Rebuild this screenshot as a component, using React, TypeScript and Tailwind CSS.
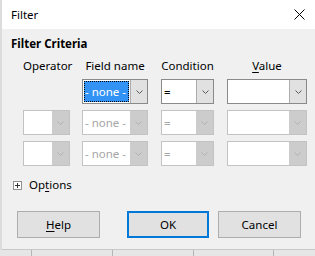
import React from 'react';

function Chevron({ disabled }: { disabled?: boolean }) {
  return (
    <svg width="9" height="6" viewBox="0 0 9 6" className="block">
      <path d="M1.5 1.5 L4.5 4.5 L7.5 1.5" fill="none" stroke={disabled ? '#b0b0b0' : '#5a5a5a'} strokeWidth="1" />
    </svg>
  );
}

function Combo({
  width,
  text,
  disabled,
  selected,
}: {
  width: string;
  text?: string;
  disabled?: boolean;
  selected?: boolean;
}) {
  return (
    <div
      className={`flex h-[25px] ${width} border bg-white ${
        disabled ? 'border-[#c3c3c3]' : 'border-[#8a8a8a]'
      }`}
    >
      <div className="flex flex-1 items-center p-[1px] overflow-hidden">
        {selected ? (
          <div className="flex h-full flex-1 items-center whitespace-nowrap border border-dotted border-black bg-[#3393f5] text-white">
            {text}
          </div>
        ) : (
          <span className={`whitespace-nowrap pl-[1px] ${disabled ? 'text-[#a6a6a6]' : 'text-black'}`}>{text}</span>
        )}
      </div>
      <div
        className={`flex w-[17px] items-center justify-center ${
          disabled ? 'bg-[#cccccc]' : 'border-l border-[#adadad] bg-[#e1e1e1]'
        }`}
      >
        <Chevron disabled={disabled} />
      </div>
    </div>
  );
}

function Row({ first }: { first?: boolean }) {
  return (
    <div className="flex h-[25px] items-center">
      <div className="w-[47px]">{!first && <Combo width="w-[47px]" disabled />}</div>
      <div className="ml-[12px]">
        <Combo width="w-[66px]" text="- none -" disabled={!first} selected={first} />
      </div>
      <div className="ml-[13px]">
        <Combo width="w-[53px]" text="=" disabled={!first} />
      </div>
      <div className="ml-[13px]">
        <Combo width="w-[80px]" disabled={!first} />
      </div>
    </div>
  );
}

export default function App() {
  return (
    <div className="flex h-[256px] w-[315px] flex-col overflow-hidden bg-[#e8e8e8] text-[11.5px] leading-[16px] text-black [font-family:'Noto_Sans',sans-serif]">
      <div className="flex flex-1">
        {/* spreadsheet peeking out on the left */}
        <div className="w-[2px] bg-[#dcdcdc]" />
        <div className="flex flex-1 flex-col border-b border-[#c8c8c8] bg-[#f0f0f0]">
          {/* Title bar */}
          <div className="flex h-[29px] items-center bg-white pl-[9px] pr-[10px]">
            <span className="flex-1">Filter</span>
            <svg width="11" height="11" viewBox="0 0 11 11">
              <path d="M0.5 0.5 L10.5 10.5 M10.5 0.5 L0.5 10.5" stroke="#000" strokeWidth="1" />
            </svg>
          </div>

          <div className="flex flex-col pl-[9px]">
            <div className="mt-[7px] font-bold">Filter Criteria</div>

            <div className="mt-[6px] flex h-[16px] pl-[12px]">
              <div className="w-[47px] whitespace-nowrap text-center">Operator</div>
              <div className="ml-[12px] w-[66px] whitespace-nowrap text-center">Field name</div>
              <div className="ml-[13px] w-[53px] whitespace-nowrap text-center">Condition</div>
              <div className="ml-[13px] w-[80px] text-center">
                <span className="underline underline-offset-2">V</span>alue
              </div>
            </div>

            <div className="mt-[5px] flex flex-col gap-[6px] pl-[12px]">
              <Row first />
              <Row />
              <Row />
            </div>

            <div className="mt-[11px] flex h-[16px] items-center gap-[7px] pl-[2px]">
              <div className="flex h-[9px] w-[9px] items-center justify-center border border-[#919191] bg-white">
                <svg width="5" height="5" viewBox="0 0 5 5">
                  <path d="M0 2.5 H5 M2.5 0 V5" stroke="#333" strokeWidth="1" />
                </svg>
              </div>
              <span>
                Op<span className="underline underline-offset-2">t</span>ions
              </span>
            </div>

            <div className="mt-[18px] flex pl-[6px]">
              <button className="flex h-[27px] w-[83px] items-center justify-center border border-[#adadad] bg-[#e1e1e1]">
                <span>
                  <span className="underline underline-offset-2">H</span>elp
                </span>
              </button>
              <button className="ml-[27px] flex h-[27px] w-[82px] items-center justify-center border-2 border-[#0078d7] bg-[#e1e1e1]">
                OK
              </button>
              <button className="ml-[9px] flex h-[27px] w-[83px] items-center justify-center border border-[#adadad] bg-[#e1e1e1]">
                Cancel
              </button>
            </div>
          </div>
        </div>
      </div>

      {/* spreadsheet grid below */}
      <div className="flex h-[6px] bg-[#e6e6e6]">
        <div className="w-[31px]" />
        <div className="w-[81px] border-l border-[#b5b5b5]" />
        <div className="w-[81px] border-l border-[#b5b5b5]" />
        <div className="w-[80px] border-l border-[#b5b5b5]" />
        <div className="flex-1 border-l border-[#b5b5b5]" />
      </div>
    </div>
  );
}
